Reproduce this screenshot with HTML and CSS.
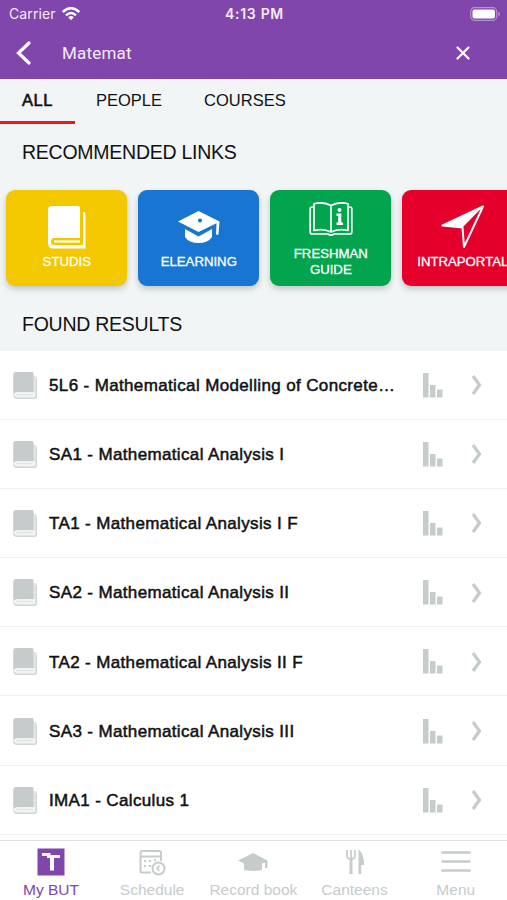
FILE: index.html
```
<!DOCTYPE html>
<html lang="en">
<head>
<meta charset="utf-8">
<title>My BUT</title>
<link rel="stylesheet" href="styles.css">
</head>
<body>
<svg width="0" height="0" class="defs">
  <symbol id="book" viewBox="0 0 38 43">
    <path fill="currentColor" fill-rule="evenodd" d="M4 0H30Q32 0 32 2V32H6Q3 32 3 35.500T6 39H35V6H36Q37.500 6 37.500 8V42.500H5Q0 42.500 0 37V4Q0 0 4 0Z"/>
    <path d="M6 35.500H32" stroke="currentColor" stroke-width="2.200" fill="none"/>
  </symbol>
  <symbol id="book-small" viewBox="0 0 24 28">
    <path fill="#e1e6e5" d="M3 0H20V4H22Q24 4 24 6V25Q24 27 22 27H4Q0 27 0 23V3Q0 0 3 0Z"/>
    <path fill="#c6cccb" d="M3 0H19Q20.500 0 20.500 1.500V20H4Q1.500 20 .5 22V3Q.5 0 3 0Z"/>
    <path fill="none" stroke="#fff" stroke-width="1.200" d="M4 24Q2 24 2 22.500T4 21H21V24Z"/>
    <path fill="none" stroke="#d0d6d5" stroke-width="1" d="M1 24Q1.500 26.500 4 26.500H21.500Q23.500 26.500 23.500 24V7"/>
  </symbol>
  <symbol id="bars" viewBox="0 0 20 25">
    <path fill="#c6cccb" d="M0 0H5.500V24.500H0ZM7 12H12.500V24.500H7ZM14 16.500H19.500V24.500H14Z"/>
  </symbol>
  <symbol id="chevron" viewBox="0 0 12 20">
    <path fill="none" stroke="#c6cccb" stroke-width="3.200" d="M2 1L8.500 10L2 19"/>
  </symbol>
</svg>

<header class="header">
  <div class="status">
    <span class="carrier">Carrier</span>
    <svg class="wifi" width="18" height="14" viewBox="0 0 18 14"><g fill="none" stroke="#fff" stroke-width="2.400"><path d="M.8 5Q9-2.500 17.200 5"/><path d="M4 8.300Q9 3.800 14 8.300"/></g><path fill="#fff" d="M6.200 10.200Q9 7.800 11.800 10.200L9 13.300Z"/></svg>
    <span class="time">4:13 PM</span>
    <svg class="battery" width="31" height="14" viewBox="0 0 31 14"><rect x=".7" y=".7" width="26" height="12.600" rx="3.800" fill="none" stroke="#b792d3" stroke-width="1.200"/><rect x="2.500" y="2.500" width="22.500" height="9" rx="2" fill="#fff"/><path fill="#b792d3" d="M28.300 4.500Q30 5.500 30 7T28.300 9.500Z"/></svg>
  </div>
  <div class="search">
    <svg class="back" width="16" height="24" viewBox="0 0 16 24"><path fill="none" stroke="#fff" stroke-width="3.200" stroke-linecap="round" d="M14 2L3.500 12L14 22"/></svg>
    <span class="query">Matemat</span>
    <svg class="close" width="14" height="14" viewBox="0 0 14 14"><path stroke="#fff" stroke-width="2.200" stroke-linecap="round" d="M1.500 1.500L12.500 12.500M12.500 1.500L1.500 12.500"/></svg>
  </div>
</header>

<nav class="tabs">
  <span class="tab tab-active">ALL</span>
  <span class="tab tab-people">PEOPLE</span>
  <span class="tab tab-courses">COURSES</span>
</nav>

<h2 class="heading heading-links">RECOMMENDED LINKS</h2>
<div class="cards">
  <div class="card yellow">
    <svg width="38" height="43"><use href="#book"/></svg>
    <span class="label">STUDIS</span>
  </div>
  <div class="card blue">
    <svg width="42" height="34" viewBox="0 0 42 34"><path fill="#fff" fill-rule="evenodd" d="M20.500 1L41.500 11.500L40.500 24Q39.500 26 38 24L38.500 13.200L20.500 22L0 11.500ZM22 8.500A2 2 0 1 0 22 12.500A2 2 0 0 0 22 8.500Z"/><path fill="#fff" d="M7 19L20.500 26.500L34 19V27Q30 33 20.500 33T7 27Z"/></svg>
    <span class="label">ELEARNING</span>
  </div>
  <div class="card green">
    <svg width="44" height="34" viewBox="0 0 44 34"><g fill="none" stroke="#fff" stroke-width="1.700" stroke-linejoin="round"><path d="M22 3.500Q14-.8 5 1.800V28.500Q14 26 22 30Q30 26 39 28.500V1.800Q30-.8 22 3.500V30"/><path d="M5 5H3Q1.200 5 1.200 7V30Q1.200 32 3 32H19Q22 34.500 25 32H41Q42.800 32 42.800 30V7Q42.800 5 41 5H39"/></g><circle cx="30.500" cy="8" r="2" fill="#fff"/><path fill="#fff" d="M27.500 11.500H32.300V20.500H34V23H27.500V20.500H29.200V14H27.500Z"/></svg>
    <span class="label">FRESHMAN<br>GUIDE</span>
  </div>
  <div class="card red">
    <svg width="44" height="44" viewBox="0 0 44 44"><path fill="none" stroke="#fff" stroke-width="2" stroke-linejoin="round" d="M42 1.500L1.500 20.500L21.500 22.500L23 42Z"/><path fill="#fff" d="M42 1.500L1.500 20.500L21.500 22.500Z"/></svg>
    <span class="label">INTRAPORTAL</span>
  </div>
</div>
<h2 class="heading heading-results">FOUND RESULTS</h2>

<main class="results">
  <div class="row"><svg class="book"><use href="#book-small"/></svg><span class="name">5L6 - Mathematical Modelling of Concrete…</span><svg class="bars"><use href="#bars"/></svg><svg class="chev"><use href="#chevron"/></svg></div>
  <div class="row"><svg class="book"><use href="#book-small"/></svg><span class="name">SA1 - Mathematical Analysis I</span><svg class="bars"><use href="#bars"/></svg><svg class="chev"><use href="#chevron"/></svg></div>
  <div class="row"><svg class="book"><use href="#book-small"/></svg><span class="name">TA1 - Mathematical Analysis I F</span><svg class="bars"><use href="#bars"/></svg><svg class="chev"><use href="#chevron"/></svg></div>
  <div class="row"><svg class="book"><use href="#book-small"/></svg><span class="name">SA2 - Mathematical Analysis II</span><svg class="bars"><use href="#bars"/></svg><svg class="chev"><use href="#chevron"/></svg></div>
  <div class="row"><svg class="book"><use href="#book-small"/></svg><span class="name">TA2 - Mathematical Analysis II F</span><svg class="bars"><use href="#bars"/></svg><svg class="chev"><use href="#chevron"/></svg></div>
  <div class="row"><svg class="book"><use href="#book-small"/></svg><span class="name">SA3 - Mathematical Analysis III</span><svg class="bars"><use href="#bars"/></svg><svg class="chev"><use href="#chevron"/></svg></div>
  <div class="row"><svg class="book"><use href="#book-small"/></svg><span class="name">IMA1 - Calculus 1</span><svg class="bars"><use href="#bars"/></svg><svg class="chev"><use href="#chevron"/></svg></div>
</main>

<footer class="tabbar">
  <div class="item item-active">
    <svg width="28" height="28" viewBox="0 0 28 28"><path fill="#8146ab" d="M.5.5H27.500V27.500H.5Z"/><path fill="#fff" d="M5 5H13.500V7H23V10H17V22.500H13V10H10V8H5Z"/></svg>
    <span>My BUT</span>
  </div>
  <div class="item">
    <svg width="28" height="28" viewBox="0 0 28 28"><g fill="none" stroke="#c6cccb" stroke-width="2"><path d="M13 24.500H4Q2.500 24.500 2.500 23V5Q2.500 3 4.500 3H21Q23 3 23 5V13M2.500 8.500H23"/><circle cx="20.500" cy="20.500" r="6"/><path stroke-width="1.600" d="M21.500 17.500L19 20.500L21.500 23"/></g><path fill="#c6cccb" d="M6 12h2v2H6zM11 12h2v2h-2zM16 11h2v2h-2zM6 17h2v2H6zM11 17h2v2h-2z"/></svg>
    <span>Schedule</span>
  </div>
  <div class="item">
    <svg width="30" height="28" viewBox="0 0 30 28"><path fill="#c6cccb" d="M15 5L29.500 12.500V20H27V14.500L24 15.500V22Q15 24 6 22V15.500L0 12.500Z"/></svg>
    <span>Record book</span>
  </div>
  <div class="item">
    <svg width="20" height="28" viewBox="0 0 20 28"><path fill="none" stroke="#c6cccb" stroke-width="1.700" d="M2 2V8Q2 11 6 11T10 8V2M6 2V11"/><path stroke="#c6cccb" stroke-width="3" d="M6 10V26"/><path fill="#c6cccb" d="M13.500 1.500Q19 5 19 17H16.200V26H13.500Z"/></svg>
    <span>Canteens</span>
  </div>
  <div class="item">
    <svg width="30" height="28" viewBox="0 0 30 28"><path stroke="#c6cccb" stroke-width="2.400" d="M.5 4.500H29.500M.5 13.500H29.500M.5 22.500H29.500"/></svg>
    <span>Menu</span>
  </div>
</footer>
</body>
</html>
```
FILE: styles.css
```
* { box-sizing: border-box; }
body {
  margin: 0;
  width: 507px;
  height: 900px;
  overflow: hidden;
  display: flex;
  flex-direction: column;
  background: #f1f5f5;
  color: #111;
  font-family: "Liberation Sans", Arial, sans-serif;
}
svg { display: block; flex: none; }
.defs { position: absolute; }

.header { height: 79px; flex: none; background: #8146ab; color: #f5eafa; }
.status { height: 27px; display: grid; grid-template-columns: 47px 18px 1fr auto 1fr 31px; align-items: center; padding: 0 6px 0 9px; }
.carrier { font: 14px/27px Inter, sans-serif; letter-spacing: .1px; white-space: nowrap; }
.wifi { margin-left: 6px; }
.time { grid-column: 4; font: 600 14px/27px Inter, sans-serif; letter-spacing: .7px; margin-right: 35px; white-space: nowrap; }
.battery { grid-column: 6; }
.search { height: 52px; display: flex; align-items: center; padding: 0 37px 0 15px; }
.query { flex: 1; margin-left: 31px; font: 17px/24px Roboto, sans-serif; letter-spacing: .2px; }

.tabs { height: 45px; flex: none; display: flex; font-size: 16.500px; line-height: 43px; }
.tab { white-space: nowrap; }
.tab-active { width: 75px; padding-left: 22px; border-bottom: 3px solid #f9131b; -webkit-text-stroke: .6px #111; letter-spacing: .5px; }
.tab-people { margin-left: 21px; }
.tab-courses { margin-left: 42px; }

.heading { margin: 0; padding-left: 22px; font-size: 19.500px; letter-spacing: -.25px; font-weight: 400; flex: none; white-space: nowrap; }
.heading-links { height: 65.500px; line-height: 57px; }
.heading-results { height: 65px; line-height: 76px; }

.cards { height: 96px; flex: none; display: flex; gap: 11px; padding-left: 6.300px; }
.card { width: 121px; height: 96px; flex: none; border-radius: 9px; display: flex; flex-direction: column; align-items: center; color: #fff; box-shadow: 0 3px 6px rgba(0,0,0,.2); }
.label { font-size: 13.200px; line-height: 16px; text-align: center; white-space: nowrap; -webkit-text-stroke: .3px #fff; }
.yellow { background: #f4c800; padding-top: 16px; }
.yellow .label { margin-top: 5px; }
.blue { background: #1875d1; padding-top: 20px; }
.blue .label { margin-top: 10px; }
.green { background: #03a44e; padding-top: 12px; }
.green .label { margin-top: 10px; }
.red { background: #e4002b; padding-top: 15px; }
.red .label { margin-top: 5px; }

.results { height: 489.500px; flex: none; background: #fff; }
.row { height: 69.200px; display: flex; align-items: center; padding: 1px 24px 0 13px; border-bottom: 1px solid #f1f3f3; }
.row .book { width: 24px; height: 28px; margin-top: 1px; }
.row .bars { width: 20px; height: 25px; }
.row .chev { width: 12px; height: 20px; margin-left: 28px; }
.name { flex: 1; margin: 1.500px 0 0 12px; font-size: 17px; letter-spacing: .36px; white-space: nowrap; -webkit-text-stroke: .5px #111; }

.tabbar { height: 60px; flex: none; background: #fff; border-top: 1.500px solid #e0e4e4; display: grid; grid-template-columns: repeat(5, 101.200px); padding-left: .4px; }
.item { display: flex; flex-direction: column; align-items: center; padding-top: 7px; color: #c6cccb; font-size: 15.500px; line-height: 18px; white-space: nowrap; }
.item span { margin-top: 5px; }
.item-active { color: #8146ab; }
```
